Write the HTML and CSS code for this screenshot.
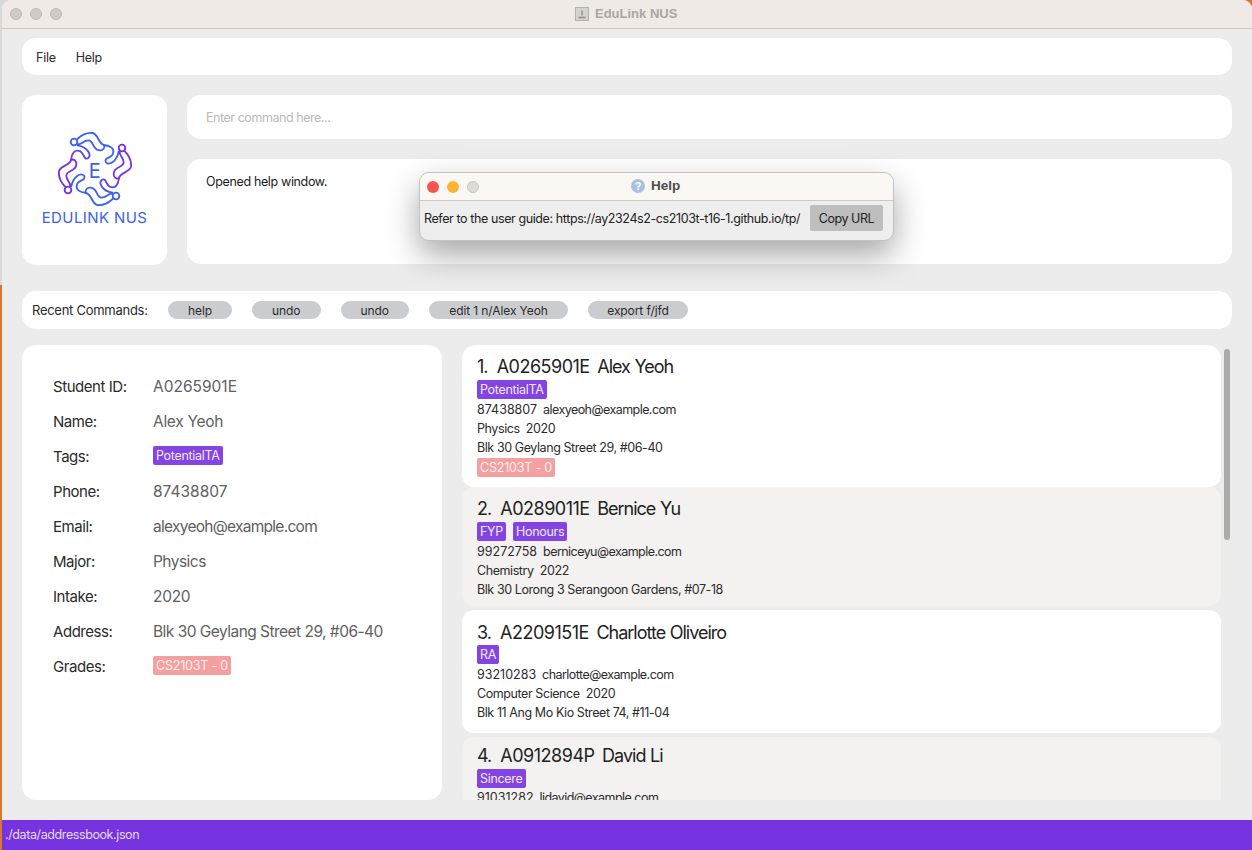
FILE: index.html
```html
<!DOCTYPE html>
<html lang="en">
<head>
<meta charset="utf-8">
<title>EduLink NUS</title>
<link rel="stylesheet" href="styles.css">
</head>
<body>
<div class="window">
  <header class="titlebar">
    <span class="light"></span><span class="light"></span><span class="light"></span>
    <div class="title">
      <svg class="doc-icon" viewBox="0 0 14 14" width="14" height="14"><rect x="0.5" y="0.5" width="13" height="13" fill="#d6d2ce" stroke="#b5b1ad"/><path d="M7 3.500v5M3.500 10.500h7" fill="none" stroke="#8d8985" stroke-width="1.3"/></svg>
      <span>EduLink NUS</span>
    </div>
  </header>
  <main class="content">
    <nav class="menubar"><span>File</span><span>Help</span></nav>
    <section class="top">
      <div class="logo-card">
        <svg class="logo" viewBox="174 390 222 228" width="74" height="76">
          <defs>
            <linearGradient id="armGrad" gradientUnits="userSpaceOnUse" x1="222" y1="420" x2="345" y2="470">
              <stop offset="0" stop-color="#7a2fdc"/><stop offset="0.7" stop-color="#7a35dc"/><stop offset="1" stop-color="#4a55e4"/>
            </linearGradient>
            <g id="arm" fill="none" stroke-width="5.500" stroke-linecap="round" stroke-linejoin="round">
              <path d="M232 414 C245 402 262 394 278 396 C296 400 294 428 312 432 C330 434 346 442 338 460 C332 472 310 470 318 484 C328 494 350 482 356 452"/>
              <path d="M232 430 C246 432 250 418 265 418 C282 418 276 446 298 448 C310 449 316 440 312 432"/>
              <circle cx="222" cy="423" r="10" fill="#fff"/>
            </g>
          </defs>
          <use href="#arm" stroke="#3c62e8"/>
          <use href="#arm" stroke="url(#armGrad)" transform="rotate(90 285 504)"/>
          <use href="#arm" stroke="#3c62e8" transform="rotate(180 285 504)"/>
          <use href="#arm" stroke="url(#armGrad)" transform="rotate(270 285 504)"/>
          <text x="284" y="530" class="logo-e">E</text>
        </svg>
        <div class="logo-word">EDULINK NUS</div>
      </div>
      <div class="command-col">
        <div class="command">Enter command here...</div>
        <div class="result">Opened help window.</div>
      </div>
    </section>
    <section class="recent">
      <span class="recent-label">Recent Commands:</span>
      <span class="chip c1">help</span>
      <span class="chip c2">undo</span>
      <span class="chip c2">undo</span>
      <span class="chip c3">edit 1 n/Alex Yeoh</span>
      <span class="chip c4">export f/jfd</span>
    </section>
    <section class="bottom">
      <aside class="detail">
        <dl class="detail-grid">
          <dt>Student ID:</dt><dd class="num">A0265901E</dd>
          <dt>Name:</dt><dd class="name">Alex Yeoh</dd>
          <dt>Tags:</dt><dd class="tag-row"><span class="tag">PotentialTA</span></dd>
          <dt>Phone:</dt><dd class="num">87438807</dd>
          <dt>Email:</dt><dd class="email">alexyeoh@example.com</dd>
          <dt>Major:</dt><dd>Physics</dd>
          <dt>Intake:</dt><dd class="name">2020</dd>
          <dt>Address:</dt><dd>Blk 30 Geylang Street 29, #06-40</dd>
          <dt>Grades:</dt><dd class="tag-row"><span class="tag grade">CS2103T - 0</span></dd>
        </dl>
      </aside>
      <div class="list-wrap">
        <div class="list">
          <article class="card odd h1">
            <h2>1.&nbsp; <span class="sid">A0265901E</span> Alex Yeoh</h2>
            <div class="tags"><span class="tag">PotentialTA</span></div>
            <p class="contact"><span class="phone">87438807</span>&nbsp; alexyeoh@example.com</p>
            <p>Physics&nbsp; 2020</p>
            <p>Blk 30 Geylang Street 29, #06-40</p>
            <div class="tags"><span class="tag grade">CS2103T - 0</span></div>
          </article>
          <article class="card even h2c">
            <h2>2.&nbsp; <span class="sid">A0289011E</span> Bernice Yu</h2>
            <div class="tags"><span class="tag">FYP</span><span class="tag">Honours</span></div>
            <p class="contact"><span class="phone">99272758</span>&nbsp; berniceyu@example.com</p>
            <p>Chemistry&nbsp; 2022</p>
            <p>Blk 30 Lorong 3 Serangoon Gardens, #07-18</p>
          </article>
          <article class="card odd h3c">
            <h2>3.&nbsp; <span class="sid">A2209151E</span> Charlotte Oliveiro</h2>
            <div class="tags"><span class="tag">RA</span></div>
            <p class="contact"><span class="phone">93210283</span>&nbsp; charlotte@example.com</p>
            <p>Computer Science&nbsp; 2020</p>
            <p>Blk 11 Ang Mo Kio Street 74, #11-04</p>
          </article>
          <article class="card even h4c">
            <h2>4.&nbsp; <span class="sid">A0912894P</span> David Li</h2>
            <div class="tags"><span class="tag">Sincere</span></div>
            <p class="contact"><span class="phone">91031282</span>&nbsp; lidavid@example.com</p>
          </article>
        </div>
        <div class="scrollbar"></div>
      </div>
    </section>
  </main>
  <footer class="status">./data/addressbook.json</footer>
  <div class="help">
    <div class="help-bar">
      <span class="hl red"></span><span class="hl amber"></span><span class="hl grey"></span>
      <div class="help-title">
        <span class="q">?</span><b>Help</b>
      </div>
    </div>
    <div class="help-body">
      <span>Refer to the user guide: https://ay2324s2-cs2103t-t16-1.github.io/tp/</span>
      <span class="copy">Copy URL</span>
    </div>
  </div>
</div>
</body>
</html>
```
FILE: styles.css
```css
* { box-sizing: border-box; }
html, body { margin: 0; height: 100%; overflow: hidden; }
body { background: linear-gradient(#d8d8d8, #d8d8d8) left top / 50% 285px no-repeat, #d9772f; font-family: Inter, "Liberation Sans", sans-serif; color: #1f1f1f; }
.window { position: relative; width: 1250px; height: 850px; margin-left: 2px; display: flex; flex-direction: column; background: #ececec; border-radius: 9px 9px 0 0; overflow: hidden; }
.titlebar { position: relative; flex: none; height: 29px; display: flex; align-items: center; gap: 8px; padding: 0 0 1px 8px; background: #efeae6; border-bottom: 1px solid #c8c6c3; }
.light { width: 12px; height: 12px; border-radius: 50%; background: #cfcbc8; border: 1px solid #bcb8b5; }
.title { position: absolute; left: 573px; top: 6px; display: flex; align-items: center; gap: 6px; font-size: 13px; font-weight: 700; color: #aaa6a3; font-family: "Liberation Sans", sans-serif; }
.content { flex: 1; min-height: 0; display: flex; flex-direction: column; padding: 9px 20px 20px 20px; }
.menubar { flex: none; height: 37px; display: flex; align-items: center; gap: 20px; padding: 1px 0 0 14px; background: #fff; border-radius: 14px; font-size: 12.5px; letter-spacing: -0.25px; color: #2a2a2a; }
.top { flex: none; display: flex; gap: 20px; margin-top: 20px; height: 170px; }
.logo-card { flex: none; width: 145px; height: 170px; background: #fff; border-radius: 14px; display: flex; flex-direction: column; align-items: center; padding-top: 36px; }
.logo { display: block; }
.logo-e { font-size: 60px; font-weight: 400; fill: #3c62e8; text-anchor: middle; font-family: Inter, sans-serif; }
.logo-word { margin-top: 2px; font-size: 15px; line-height: 18px; font-weight: 400; letter-spacing: 0.4px; color: #3c62e8; white-space: nowrap; }
.command-col { flex: 1; display: flex; flex-direction: column; gap: 20px; }
.command { height: 44px; background: #fff; border-radius: 14px; padding: 15px 19px; font-size: 12.5px; letter-spacing: -0.45px; color: #b9b9b9; line-height: 15px; }
.result { height: 105px; background: #fff; border-radius: 14px; padding: 15px 19px; font-size: 12.5px; letter-spacing: -0.35px; line-height: 15px; color: #1c1c1c; }
.recent { flex: none; height: 38px; margin-top: 26px; background: #fff; border-radius: 14px; display: flex; align-items: center; padding-left: 10px; font-size: 13px; letter-spacing: -0.27px; color: #2a2a2a; }
.recent-label { width: 136px; flex: none; }
.chip { height: 18px; border-radius: 9px; background: #cbcccf; display: flex; align-items: center; justify-content: center; font-size: 12px; letter-spacing: -0.1px; margin-right: 20px; }
.c1 { width: 64px; }
.c2 { width: 68.5px; }
.c3 { width: 139px; }
.c4 { width: 100px; }
.bottom { flex: 1; min-height: 0; display: flex; gap: 20px; margin-top: 16px; }
.detail { flex: none; width: 420px; background: #fff; border-radius: 14px; padding: 24px 31px; }
.detail-grid { margin: 0; display: grid; grid-template-columns: 100px 1fr; grid-auto-rows: 35px; align-items: center; font-size: 15.5px; }
.detail-grid dt { color: #2a2a2a; font-size: 15px; letter-spacing: -0.45px; }
.detail-grid dd { margin: 0; color: #606060; letter-spacing: -0.53px; }
.detail-grid dd.num { letter-spacing: 0; }
.detail-grid dd.name { letter-spacing: -0.3px; }
.detail-grid dd.email { letter-spacing: -0.72px; }
.detail-grid dd.tag-row { display: flex; margin-bottom: 2px; letter-spacing: 0; }
.list-wrap { flex: 1; min-width: 0; position: relative; display: flex; }
.list { width: 759px; flex: none; overflow: hidden; display: flex; flex-direction: column; border-radius: 14px 14px 0 0; }
.card { flex: none; padding: 10px 15px 0; border-radius: 12px; }
.card.odd { background: #fff; }
.card.even { background: #f3f2f1; }
.h1 { height: 142px; }
.h2c { height: 119px; margin-bottom: 4px; }
.h3c { height: 123px; margin-bottom: 4px; padding-top: 11px; }
.h3c h2 + .tags { margin-top: 0; }
.h4c { padding-top: 7px; }
.card h2 { margin: 0; font-size: 18px; font-weight: 400; line-height: 24px; letter-spacing: -1px; word-spacing: 0.5px; color: #222; white-space: nowrap; }
.sid { letter-spacing: -0.5px; margin-right: 3px; }
.card p { margin: 0; font-size: 12.5px; line-height: 19px; letter-spacing: -0.42px; color: #2c2c2c; white-space: nowrap; }
.card p.contact { letter-spacing: -0.55px; }
.card p .phone { letter-spacing: 0; }
.tags { display: flex; gap: 7px; height: 19px; margin: 1px 0 0; align-items: center; }
.card .tags + p { margin-top: 1px; }
.card.h4c .tags + p { margin-top: 0; }
.tag { display: inline-flex; align-items: center; height: 19px; padding: 0 3px; background: #8344e2; color: #f1eafc; border-radius: 2px; font-size: 12.5px; letter-spacing: -0.3px; }
.tag.grade { background: #f4a0a0; color: #fdeeee; letter-spacing: -0.2px; }
.scrollbar { position: absolute; right: 2px; top: 4px; width: 6px; height: 191px; border-radius: 3px; background: #ababab; }
.status { flex: none; height: 30px; background: #7633e0; color: #e6dcf8; font-size: 12.5px; letter-spacing: -0.4px; line-height: 30px; padding-left: 3px; }
.help { position: absolute; left: 417px; top: 172px; width: 475px; height: 69px; border-radius: 10px; background: #eee; border: 1px solid #c4c2c0; box-shadow: 0 14px 32px rgba(0,0,0,0.35); overflow: hidden; }
.help-bar { position: relative; height: 28px; background: #fbf7f3; border-bottom: 1px solid #cbc9c7; display: flex; align-items: center; gap: 8px; padding-left: 7px; }
.hl { width: 12px; height: 12px; border-radius: 50%; }
.red { background: #f95350; }
.amber { background: #fcb435; }
.grey { background: #dedad6; border: 1px solid #c8c4c0; }
.help-title { position: absolute; left: 211px; top: 5px; display: flex; align-items: center; gap: 6px; font-size: 13.5px; color: #4e4b49; font-family: "Liberation Sans", sans-serif; }
.q { width: 14px; height: 14px; border-radius: 50%; background: #a9bfe8; color: #fff; font-size: 11px; font-weight: 700; text-align: center; line-height: 14px; }
.help-body { height: 39px; display: flex; align-items: center; justify-content: space-between; padding: 0 10px 5px 4px; font-size: 12.5px; letter-spacing: -0.4px; color: #222; white-space: nowrap; }
.copy { flex: none; width: 73px; height: 26px; background: #bebebe; border-radius: 2px; display: flex; align-items: center; justify-content: center; letter-spacing: -0.45px; }
```
